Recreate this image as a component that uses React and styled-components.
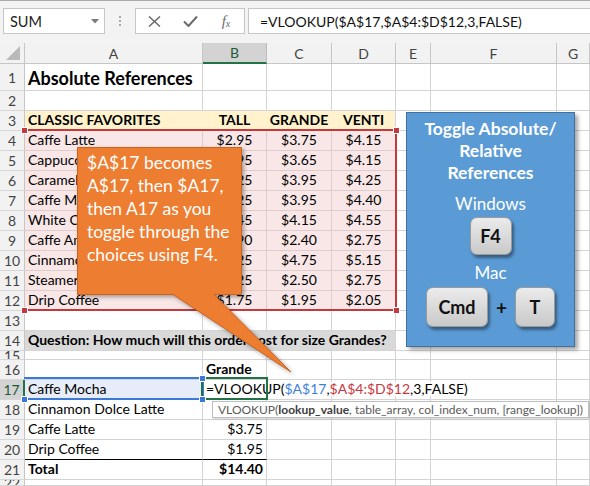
import React from 'react';
import styled, { createGlobalStyle } from 'styled-components';

const GlobalStyle = createGlobalStyle`
  html, body { margin: 0; padding: 0; background: #fff; overflow: hidden; }
  #root { width: 590px; height: 486px; }
`;

const CAL = `"Lato", "Liberation Sans", sans-serif`;
const GRID = '#d4d4d4';
const HEAD_LINE = '#c6c6c6';
const PINK = '#f9e7e7';
const PINK_GRID = '#ddcdcd';
const YELLOW = '#fff2cc';
const QGRAY = '#d9d9d9';
const BLUE_FILL = '#e6edf8';
const XL_GREEN = '#217346';
const RED_REF = '#c4393e';
const BLUE_REF = '#3b78d8';

const Window = styled.div`
  position: relative;
  width: 590px;
  height: 486px;
  overflow: hidden;
  background: #fff;
  font-family: ${CAL};
`;

/* ---------- formula bar ---------- */
const FormulaBar = styled.div`
  box-sizing: border-box;
  height: 43px;
  background: #f3f3f3;
  border-top: 1px solid #a9a9a9;
  display: flex;
  align-items: flex-start;
  padding: 7px 0 0 3px;
`;

const NameBox = styled.div`
  box-sizing: border-box;
  width: 102px;
  height: 26px;
  background: #fff;
  border: 1px solid #c6c6c6;
  display: flex;
  align-items: center;
  justify-content: space-between;
  padding: 0 5px 0 6px;
  font-size: 14.5px;
  color: #222;
`;

const Grip = styled.div`
  width: 30px;
  height: 26px;
  display: flex;
  flex-direction: column;
  align-items: center;
  justify-content: center;
  gap: 2px;
  & > i {
    display: block;
    width: 2px;
    height: 2px;
    background: #a8a8a8;
  }
`;

const FxGroup = styled.div`
  box-sizing: border-box;
  width: 110px;
  height: 26px;
  background: #fff;
  border: 1px solid #c6c6c6;
  display: flex;
`;

const FxBtn = styled.div`
  width: 36px;
  height: 24px;
  display: flex;
  align-items: center;
  justify-content: center;
  color: #6b6b6b;
`;

const FxGlyph = styled.span`
  font-family: "Liberation Serif", serif;
  font-style: italic;
  font-size: 15px;
  color: #6b6b6b;
  & sub { font-size: 10px; vertical-align: -1px; }
`;

const FormulaInput = styled.div`
  box-sizing: border-box;
  flex: 1;
  margin-left: 3px;
  margin-right: -2px;
  height: 26px;
  background: #fff;
  border: 1px solid #c6c6c6;
  display: flex;
  align-items: center;
  padding-left: 11px;
  font-size: 14px;
  color: #111;
  white-space: nowrap;
`;

/* ---------- sheet grid ---------- */
const Sheet = styled.div`
  display: grid;
  grid-template-columns: 25px 178px 64px 65px 64px 35px 126px 33px;
  grid-template-rows: 21px 27px repeat(13, 20px) 9px repeat(6, 20px) 1fr;
  height: 443px;
`;

const Corner = styled.div`
  box-sizing: border-box;
  background: #f2f2f2;
  border-right: 1px solid ${HEAD_LINE};
  border-bottom: 1px solid ${HEAD_LINE};
  display: flex;
  align-items: flex-end;
  justify-content: flex-end;
  padding: 0 4px 3px 0;
`;

const ColHead = styled.div`
  box-sizing: border-box;
  background: ${p => (p.$active ? '#d3d3d3' : '#f2f2f2')};
  border-right: 1px solid ${p => (p.$active ? '#bdbdbd' : HEAD_LINE)};
  border-bottom: ${p => (p.$active ? `2px solid ${XL_GREEN}` : `1px solid ${HEAD_LINE}`)};
  display: flex;
  align-items: center;
  justify-content: center;
  font-size: 14px;
  color: ${p => (p.$active ? '#1f5a38' : '#444')};
`;

const RowHead = styled.div`
  box-sizing: border-box;
  background: ${p => (p.$active ? '#d3d3d3' : '#f2f2f2')};
  border-right: ${p => (p.$active ? `2px solid ${XL_GREEN}` : `1px solid ${HEAD_LINE}`)};
  border-bottom: 1px solid #d6d6d6;
  display: flex;
  align-items: center;
  justify-content: center;
  font-size: 14px;
  color: ${p => (p.$active ? '#1f5a38' : '#444')};
  overflow: hidden;
`;

const Cell = styled.div`
  box-sizing: border-box;
  min-width: 0;
  border-right: 1px solid ${p => p.$v || GRID};
  border-bottom: 1px solid ${p => p.$h || GRID};
  background: ${p => p.$fill || '#fff'};
  display: flex;
  align-items: flex-end;
  justify-content: ${p => (p.$align === 'center' ? 'center' : p.$align === 'right' ? 'flex-end' : 'flex-start')};
  padding: 0 3px 3px 3px;
  font-size: ${p => (p.$title ? 18 : 14)}px;
  font-weight: ${p => (p.$bold || p.$title ? 700 : 400)};
  line-height: 1;
  white-space: nowrap;
  color: #000;
  overflow: visible;
`;

const CellText = styled.span`
  position: relative;
  z-index: 1;
  background: ${p => p.$bg || 'transparent'};
`;

const RefA = styled.span` color: #3f7fd9; `;
const RefB = styled.span` color: #c7383e; `;

/* ---------- overlays ---------- */
const RangeBox = styled.div`
  position: absolute;
  box-sizing: border-box;
  left: ${p => p.$x}px;
  top: ${p => p.$y}px;
  width: ${p => p.$w}px;
  height: ${p => p.$h}px;
  border: 2px solid ${p => p.$color};
  border-left-width: ${p => (p.$noLeft ? 0 : 2)}px;
  pointer-events: none;
  z-index: 3;
`;

const Handle = styled.div`
  position: absolute;
  width: 5px;
  height: 5px;
  background: ${p => p.$color};
  border: 1px solid #fff;
  left: ${p => p.$x - 3}px;
  top: ${p => p.$y - 3}px;
  z-index: 4;
`;

const Tooltip = styled.div`
  position: absolute;
  box-sizing: border-box;
  left: 212px;
  top: 401px;
  width: 377px;
  height: 17px;
  background: #fff;
  border: 1px solid #bfbfbf;
  box-shadow: 1px 1px 2px rgba(0, 0, 0, 0.18);
  display: flex;
  align-items: center;
  padding-left: 5px;
  font-size: 12px;
  color: #5a5a5a;
  white-space: nowrap;
  overflow: hidden;
  z-index: 5;
  & b { color: #404040; }
`;

const CalloutWrap = styled.div`
  position: absolute;
  left: 77px;
  top: 147px;
  width: 216px;
  height: 228px;
  z-index: 6;
`;

const CalloutShape = styled.svg`
  position: absolute;
  left: 0;
  top: 0;
  overflow: visible;
  filter: drop-shadow(2px 2px 2px rgba(0, 0, 0, 0.35));
`;

const CalloutText = styled.div`
  position: relative;
  padding: 4px 0 0 10px;
  color: #fff;
  font-size: 17.5px;
  line-height: 23px;
  white-space: nowrap;
`;

const KeyPanel = styled.div`
  position: absolute;
  box-sizing: border-box;
  left: 406px;
  top: 112px;
  width: 169px;
  height: 235px;
  background: #5b9bd5;
  border: 1px solid #41719c;
  box-shadow: 3px 3px 4px rgba(0, 0, 0, 0.35);
  display: flex;
  flex-direction: column;
  align-items: center;
  padding-top: 5px;
  color: #fff;
  z-index: 6;
`;

const PanelTitle = styled.div`
  font-size: 17.5px;
  font-weight: 700;
  line-height: 22px;
  text-align: center;
`;

const PanelLabel = styled.div`
  font-size: 17px;
  line-height: 22px;
  margin-top: ${p => p.$mt}px;
`;

const KeyRow = styled.div`
  display: flex;
  align-items: center;
  margin-top: ${p => p.$mt}px;
`;

const Key = styled.div`
  box-sizing: border-box;
  width: ${p => p.$w}px;
  height: ${p => p.$h}px;
  border-radius: 7px;
  border: 1px solid #9a9a9a;
  background: linear-gradient(#ebebeb, #c9c9c9);
  box-shadow: 2px 3px 3px rgba(0, 0, 0, 0.4);
  display: flex;
  align-items: center;
  justify-content: center;
  font-size: 18px;
  font-weight: 700;
  color: #111;
`;

const Plus = styled.div`
  width: 27px;
  text-align: center;
  font-size: 19px;
  font-weight: 700;
  color: #111;
`;

/* ---------- data ---------- */
const COLS = ['A', 'B', 'C', 'D', 'E', 'F', 'G'];

const pink = (name, b, c, d) => [
  { t: name, fill: PINK, v: PINK_GRID, h: PINK_GRID },
  { t: b, fill: PINK, v: PINK_GRID, h: PINK_GRID, align: 'center' },
  { t: c, fill: PINK, v: PINK_GRID, h: PINK_GRID, align: 'center' },
  { t: d, fill: PINK, v: PINK_GRID, h: PINK_GRID, align: 'center' },
];

const formula = (
  <CellText $bg="#fff">
    =VLOOKUP(<RefA>$A$17</RefA>,<RefB>$A$4:$D$12</RefB>,3,FALSE)
  </CellText>
);

const ROWS = [
  { n: 1, cells: [{ t: <CellText>Absolute References</CellText>, title: true }] },
  { n: 2, cells: [] },
  {
    n: 3,
    cells: [
      { t: 'CLASSIC FAVORITES', bold: true, fill: YELLOW, v: YELLOW },
      { t: 'TALL', bold: true, fill: YELLOW, v: YELLOW, align: 'center' },
      { t: 'GRANDE', bold: true, fill: YELLOW, v: YELLOW, align: 'center' },
      { t: 'VENTI', bold: true, fill: YELLOW, align: 'center' },
    ],
  },
  { n: 4, cells: pink('Caffe Latte', '$2.95', '$3.75', '$4.15') },
  { n: 5, cells: pink('Cappuccino', '$2.95', '$3.65', '$4.15') },
  { n: 6, cells: pink('Caramel Macchiato', '$3.25', '$3.95', '$4.25') },
  { n: 7, cells: pink('Caffe Mocha', '$3.25', '$3.95', '$4.40') },
  { n: 8, cells: pink('White Chocolate Mocha', '$3.45', '$4.15', '$4.55') },
  { n: 9, cells: pink('Caffe Americano', '$1.90', '$2.40', '$2.75') },
  { n: 10, cells: pink('Cinnamon Dolce Latte', '$4.25', '$4.75', '$5.15') },
  { n: 11, cells: pink('Steamer', '$2.25', '$2.50', '$2.75') },
  { n: 12, cells: pink('Drip Coffee', '$1.75', '$1.95', '$2.05') },
  { n: 13, cells: [] },
  {
    n: 14,
    cells: [
      {
        t: <CellText>Question: How much will this order cost for size Grandes?</CellText>,
        bold: true,
        fill: QGRAY,
        v: QGRAY,
      },
      { fill: QGRAY, v: QGRAY },
      { fill: QGRAY, v: QGRAY },
      { fill: QGRAY },
    ],
  },
  { n: 15, cells: [] },
  { n: 16, cells: [{}, { t: 'Grande', bold: true }] },
  {
    n: 17,
    active: true,
    cells: [{ t: 'Caffe Mocha', fill: BLUE_FILL }, { t: formula }],
  },
  { n: 18, cells: [{ t: 'Cinnamon Dolce Latte' }, { t: '$4.75', align: 'right' }] },
  { n: 19, cells: [{ t: 'Caffe Latte' }, { t: '$3.75', align: 'right' }] },
  {
    n: 20,
    cells: [
      { t: 'Drip Coffee', h: '#000' },
      { t: '$1.95', align: 'right', h: '#000' },
    ],
  },
  {
    n: 21,
    cells: [
      { t: 'Total', bold: true },
      { t: '$14.40', bold: true, align: 'right' },
    ],
  },
  { n: 22, cells: [] },
];

function SheetRow({ row }) {
  return (
    <>
      <RowHead $active={row.active}>{row.n}</RowHead>
      {COLS.map((c, i) => {
        const cell = row.cells[i] || {};
        return (
          <Cell
            key={c}
            $fill={cell.fill}
            $v={cell.v}
            $h={cell.h}
            $align={cell.align}
            $bold={cell.bold}
            $title={cell.title}
          >
            {cell.t}
          </Cell>
        );
      })}
    </>
  );
}

export default function App() {
  return (
    <>
      <GlobalStyle />
      <Window>
        <FormulaBar>
          <NameBox>
            <span>SUM</span>
            <svg width="8" height="5" viewBox="0 0 8 5">
              <path d="M0 0 H8 L4 4.5 Z" fill="#7a7a7a" />
            </svg>
          </NameBox>
          <Grip>
            <i />
            <i />
            <i />
          </Grip>
          <FxGroup>
            <FxBtn>
              <svg width="13" height="11" viewBox="0 0 13 11">
                <path d="M1 0.5 L12 10.5 M12 0.5 L1 10.5" stroke="#6b6b6b" strokeWidth="1.5" fill="none" />
              </svg>
            </FxBtn>
            <FxBtn>
              <svg width="15" height="12" viewBox="0 0 15 12">
                <path d="M1 6.5 L5.5 11 L14 1.5" stroke="#6b6b6b" strokeWidth="2" fill="none" />
              </svg>
            </FxBtn>
            <FxBtn>
              <FxGlyph>
                f<sub>x</sub>
              </FxGlyph>
            </FxBtn>
          </FxGroup>
          <FormulaInput>=VLOOKUP($A$17,$A$4:$D$12,3,FALSE)</FormulaInput>
        </FormulaBar>

        <Sheet>
          <Corner>
            <svg width="14" height="14" viewBox="0 0 14 14">
              <path d="M14 0 V14 H0 Z" fill="#b9b9b9" />
            </svg>
          </Corner>
          {COLS.map(c => (
            <ColHead key={c} $active={c === 'B'}>
              {c}
            </ColHead>
          ))}
          {ROWS.map(r => (
            <SheetRow key={r.n} row={r} />
          ))}
        </Sheet>

        {/* red reference range $A$4:$D$12 */}
        <RangeBox $x={24} $y={129} $w={373} $h={182} $color={RED_REF} $noLeft />
        <Handle $color={RED_REF} $x={396} $y={130} />
        <Handle $color={RED_REF} $x={396} $y={310} />
        <Handle $color={RED_REF} $x={24} $y={130} />
        <Handle $color={RED_REF} $x={24} $y={310} />

        {/* blue reference $A$17 */}
        <RangeBox $x={24} $y={377} $w={180} $h={23} $color={BLUE_REF} $noLeft />
        {/* active cell B17 */}
        <RangeBox $x={201} $y={377} $w={67} $h={23} $color={XL_GREEN} />
        <Handle $color={BLUE_REF} $x={202} $y={378} />
        <Handle $color={BLUE_REF} $x={202} $y={399} />
        <Handle $color={BLUE_REF} $x={24} $y={399} />

        <Tooltip>
          VLOOKUP(<b>lookup_value</b>, table_array, col_index_num, [range_lookup])
        </Tooltip>

        <CalloutWrap>
          <CalloutShape width="216" height="228" viewBox="0 0 216 228">
            <path
              d="M0.5 0.5 H164.5 V147.5 H137 L214 225 L96 147.5 H0.5 Z"
              fill="#ed7d31"
              stroke="#c9631e"
              strokeWidth="1"
            />
          </CalloutShape>
          <CalloutText>
            $A$17 becomes
            <br />
            A$17, then $A17,
            <br />
            then A17 as you
            <br />
            toggle through the
            <br />
            choices using F4.
          </CalloutText>
        </CalloutWrap>

        <KeyPanel>
          <PanelTitle>
            Toggle Absolute/
            <br />
            Relative
            <br />
            References
          </PanelTitle>
          <PanelLabel $mt={9}>Windows</PanelLabel>
          <KeyRow $mt={2}>
            <Key $w={42} $h={38}>F4</Key>
          </KeyRow>
          <PanelLabel $mt={7}>Mac</PanelLabel>
          <KeyRow $mt={3}>
            <Key $w={62} $h={40}>Cmd</Key>
            <Plus>+</Plus>
            <Key $w={40} $h={40}>T</Key>
          </KeyRow>
        </KeyPanel>
      </Window>
    </>
  );
}
